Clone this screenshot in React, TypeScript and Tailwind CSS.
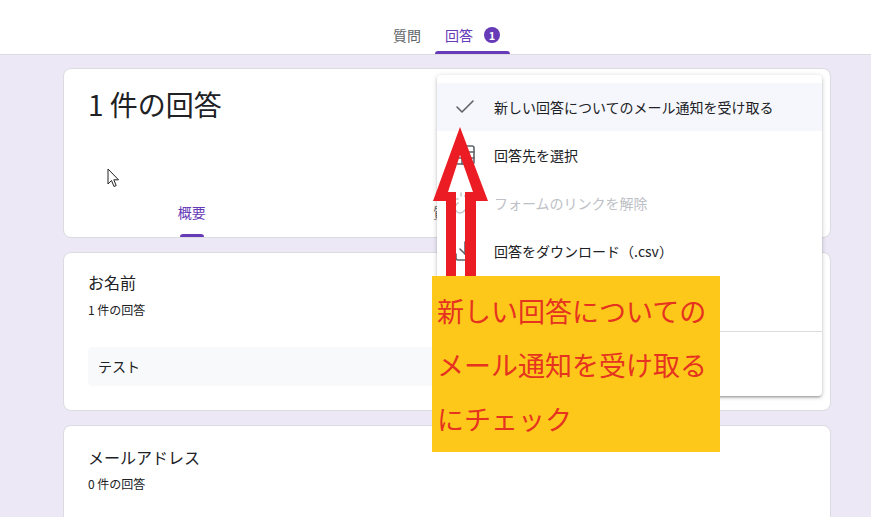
import { Check, Sheet, Unlink, Download, Printer, Trash2 } from 'lucide-react';

const menuItems = [
  { icon: Check, label: '新しい回答についてのメール通知を受け取る', active: true },
  { icon: Sheet, label: '回答先を選択' },
  { icon: Unlink, label: 'フォームのリンクを解除', disabled: true },
  { icon: Download, label: '回答をダウンロード（.csv）' },
  { icon: Printer, label: 'すべての回答を印刷' },
];

function Cursor() {
  return (
    <svg className="absolute left-[107px] top-[168px]" width="13" height="20" viewBox="0 0 13 20">
      <path d="M1 1 L1 16 L4.5 12.5 L7 18.5 L9.2 17.6 L6.8 11.8 L11.5 11.8 Z" fill="#fff" stroke="#222" strokeWidth="1" strokeLinejoin="round" />
    </svg>
  );
}

export default function App() {
  return (
    <div className="relative w-[871px] h-[517px] overflow-hidden bg-[#ece8f6] font-['Noto_Sans_CJK_JP','Noto_Sans',sans-serif] text-[#202124]">
      {/* header tabs */}
      <div className="h-[55px] bg-white border-b border-[#dadce0] flex items-end pl-[383px]">
        <div className="w-[48px] h-full flex flex-col items-center justify-end">
          <span className="text-[14px] leading-5 text-[#5f6368] mb-[6px]">質問</span>
          <div className="h-[3px]" />
        </div>
        <div className="ml-[4px] w-[75px] h-full flex flex-col items-center justify-end">
          <div className="flex items-center gap-[11px] mb-[6px]">
            <span className="text-[14px] leading-5 text-[#673ab7]">回答</span>
            <span className="w-4 h-4 rounded-full bg-[#673ab7] text-white text-[11px] font-bold flex items-center justify-center leading-none">1</span>
          </div>
          <div className="h-[3px] w-full bg-[#673ab7] rounded-t-[3px]" />
        </div>
      </div>

      <div className="ml-[63px] w-[768px] pt-[13px] flex flex-col">
        {/* summary card */}
        <div className="relative h-[170px] bg-white border border-[#dadce0] rounded-lg flex flex-col justify-between">
          <div className="pl-6 pt-[17px] text-[28px] leading-9">1 件の回答</div>
          <div className="grid grid-cols-3">
            {['概要', '質問', '個別'].map((t, i) => (
              <div key={t} className="flex flex-col items-center">
                <span className={`text-[14px] leading-5 ${i === 0 ? 'text-[#673ab7]' : 'text-[#5f6368]'}`}>{t}</span>
                <div className={`mt-3 h-[3px] w-6 rounded-t-[3px] ${i === 0 ? 'bg-[#673ab7]' : 'bg-transparent'}`} />
              </div>
            ))}
          </div>
        </div>

        {/* name card */}
        <div className="mt-[14px] bg-white border border-[#dadce0] rounded-lg px-6 pt-[19px] pb-6">
          <div className="text-[16px] leading-5">お名前</div>
          <div className="mt-[10px] text-[12px] leading-4">1 件の回答</div>
          <div className="mt-[29px] h-[39px] bg-[#f8f9fa] rounded flex items-center px-[10px] text-[14px]">テスト</div>
        </div>

        {/* email card */}
        <div className="mt-[14px] h-[200px] bg-white border border-[#dadce0] rounded-lg px-6 pt-[21px]">
          <div className="text-[16px] leading-5">メールアドレス</div>
          <div className="mt-[9px] text-[12px] leading-4">0 件の回答</div>
        </div>
      </div>

      <Cursor />

      {/* dropdown menu */}
      <div className="absolute left-[437px] top-[75px] w-[385px] bg-white rounded py-2 shadow-[0_2px_2px_rgba(0,0,0,0.14),0_3px_1px_-2px_rgba(0,0,0,0.12),0_1px_5px_rgba(0,0,0,0.2)]">
        {menuItems.map(({ icon: Icon, label, active, disabled }) => (
          <div key={label} className={`h-12 flex items-center pl-4 ${active ? 'bg-[#f5f7fc]' : ''}`}>
            <Icon className={`w-6 h-6 ${disabled ? 'text-[#c4c7c9]' : 'text-[#5f6368]'}`} strokeWidth={1.6} />
            <span className={`ml-[17px] text-[14px] ${disabled ? 'text-[#bdc1c6]' : 'text-[#202124]'}`}>{label}</span>
          </div>
        ))}
        <div className="my-2 h-px bg-[#dadce0]" />
        <div className="h-12 flex items-center pl-4">
          <Trash2 className="w-6 h-6 text-[#5f6368]" strokeWidth={1.6} />
          <span className="ml-[17px] text-[14px]">すべての回答を削除</span>
        </div>
      </div>

      {/* red arrow */}
      <svg className="absolute left-0 top-0 pointer-events-none" width="871" height="517" viewBox="0 0 871 517">
        <path
          fillRule="evenodd"
          fill="#ec1c24"
          d="M460 127 L488 201 L476 201 L476 282 L446 282 L446 201 L433 201 Z M460 155 L473 192 L465 192 L465 282 L456 282 L456 192 L448 192 Z"
        />
      </svg>

      {/* annotation */}
      <div className="absolute left-[432px] top-[276px] w-[288px] h-[176px] bg-[#fec81b] pl-[5px] pt-[8px] text-[27px] leading-[54px] text-[#e5331f]">
        <div>新しい回答についての</div>
        <div>メール通知を受け取る</div>
        <div>にチェック</div>
      </div>
    </div>
  );
}
